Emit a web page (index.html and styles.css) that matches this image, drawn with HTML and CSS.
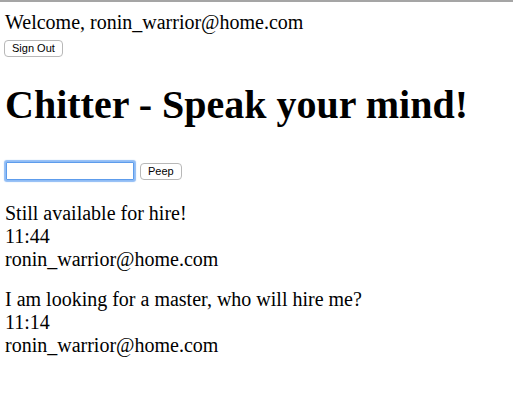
FILE: index.html
```html
<!DOCTYPE html>
<html>
<head>
<meta charset="utf-8">
<link rel="stylesheet" href="styles.css">
</head>
<body>
<div class="page">
  <div class="welcome">Welcome, ronin_warrior@home.com</div>
  <button class="btn signout">Sign Out</button>
  <h1 class="title">Chitter - Speak your mind!</h1>
  <form class="peep-form">
    <input class="peep-input" type="text">
    <button class="btn" type="button">Peep</button>
  </form>
  <div class="peep">
    <div>Still available for hire!</div>
    <div>11:44</div>
    <div>ronin_warrior@home.com</div>
  </div>
  <div class="peep">
    <div>I am looking for a master, who will hire me?</div>
    <div>11:14</div>
    <div>ronin_warrior@home.com</div>
  </div>
</div>
</body>
</html>
```

FILE: styles.css
```css
html, body { margin: 0; padding: 0; background: #fff; }
body {
  border-top: 2px solid #a5a5a5;
  font-family: "Liberation Serif", "Times New Roman", serif;
  font-size: 20px;
  color: #000;
}
.page { padding: 9px 4px; }
.welcome { line-height: 23px; padding-left: 1px; }
.btn {
  font-family: "Liberation Sans", Arial, sans-serif;
  font-size: 11px;
  background: #fff;
  border: 1px solid #b8b8b8;
  border-radius: 4px;
  padding: 1px 7px;
  height: 17px;
  color: #000;
  margin: 0;
}
.signout { margin-top: 2px; }
.title {
  font-size: 40px;
  font-weight: bold;
  margin: 24px 0 34px 1px;
}
.peep-form { display: flex; align-items: center; gap: 6px; margin-bottom: 22px; }
.peep-input {
  width: 122px;
  height: 16px;
  border: 1px solid #5d9cec;
  box-shadow: 0 0 1px 2px #8fbcf5;
  border-radius: 1px;
  margin-left: 2px;
  padding: 0 2px;
  outline: none;
}
.peep-input::before { content: ""; }
.peep { line-height: 23px; margin-bottom: 17px; padding-left: 1px; }
```
